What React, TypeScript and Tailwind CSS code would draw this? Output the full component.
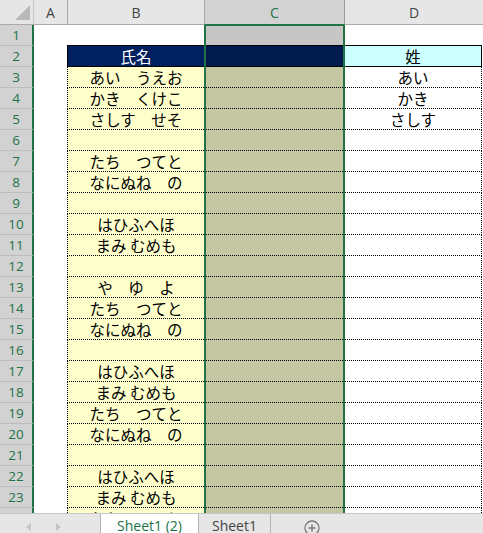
import React from 'react';

type Row = { n: number; b?: string; d?: string };

const rows: Row[] = [
  { n: 1 },
  { n: 2, b: '氏名', d: '姓' },
  { n: 3, b: 'あい　うえお', d: 'あい' },
  { n: 4, b: 'かき　くけこ', d: 'かき' },
  { n: 5, b: 'さしす　せそ', d: 'さしす' },
  { n: 6 },
  { n: 7, b: 'たち　つてと' },
  { n: 8, b: 'なにぬね　の' },
  { n: 9 },
  { n: 10, b: 'はひふへほ' },
  { n: 11, b: 'まみ むめも' },
  { n: 12 },
  { n: 13, b: 'や　ゆ　よ' },
  { n: 14, b: 'たち　つてと' },
  { n: 15, b: 'なにぬね　の' },
  { n: 16 },
  { n: 17, b: 'はひふへほ' },
  { n: 18, b: 'まみ むめも' },
  { n: 19, b: 'たち　つてと' },
  { n: 20, b: 'なにぬね　の' },
  { n: 21 },
  { n: 22, b: 'はひふへほ' },
  { n: 23, b: 'まみ むめも' },
  { n: 24, b: 'たち　つてと' },
];

const uiFont = { fontFamily: '"Open Sans", "Liberation Sans", sans-serif' };
const jpFont = { fontFamily: '"Noto Sans CJK JP", "Noto Sans", sans-serif' };

function SheetRow({ row }: { row: Row }) {
  const first = row.n === 1;
  const head = row.n === 2;

  const bCls = first
    ? 'bg-white border-b border-black'
    : head
      ? 'bg-[#002060] text-white border-l border-b border-black'
      : 'bg-[#ffffcc] text-black border-l border-b border-dotted border-black';

  // inner fill of the selected column C
  const cCls = first
    ? 'bg-[#c6c6c6] border-t border-t-[#217346] border-b border-b-black'
    : head
      ? 'bg-[#001a4d] border-b border-b-black'
      : 'bg-[#c5c6a2] border-b border-dotted border-b-black';

  const dCls = first
    ? 'bg-white border-b border-black'
    : head
      ? 'bg-[#ccffff] border-b border-black border-r border-r-black'
      : 'bg-white border-b border-r border-dotted border-black';

  return (
    <div className="flex h-[21px] shrink-0">
      <div
        className="w-[34px] h-full shrink-0 bg-[#d2d2d2] border-r-2 border-[#217346] border-b border-b-[#bdbdbd] flex items-center justify-center text-[13.5px] text-[#217346]"
        style={uiFont}
      >
        {row.n}
      </div>
      <div className="w-[33px] h-full shrink-0 bg-white" />
      <div
        className={`w-[137px] h-full shrink-0 flex items-center justify-center text-[15.5px] leading-[20px] ${bCls}`}
        style={jpFont}
      >
        {row.b}
      </div>
      <div className="w-[141px] h-full shrink-0 border-x-2 border-[#217346]">
        <div className={`w-full h-full ${cCls}`} />
      </div>
      <div
        className={`w-[137px] h-full shrink-0 flex items-center justify-center text-[15.5px] leading-[20px] text-black ${dCls}`}
        style={jpFont}
      >
        {row.d}
      </div>
    </div>
  );
}

export default function App() {
  return (
    <div className="w-[483px] h-[533px] overflow-hidden bg-white flex flex-col">
      {/* column headers */}
      <div className="flex h-[25px] shrink-0 text-[14px]" style={uiFont}>
        <div className="w-[34px] h-full shrink-0 bg-[#e6e6e6] border-r border-r-[#c8c8c8] border-b border-b-[#ababab] flex items-end justify-end pr-[1px] pb-[1px]">
          <svg width="18" height="18" viewBox="0 0 18 18" className="mb-[1px]">
            <polygon points="16,1 16,16 1,16" fill="#b9b9b9" />
          </svg>
        </div>
        <div className="w-[34px] h-full shrink-0 bg-[#e6e6e6] border-r border-r-[#ababab] border-b border-b-[#ababab] flex items-center justify-center text-[#444]">
          A
        </div>
        <div className="w-[136px] h-full shrink-0 bg-[#e6e6e6] border-b border-b-[#ababab] flex items-center justify-center text-[#444]">
          B
        </div>
        <div className="w-[141px] h-full shrink-0 bg-[#d2d2d2] border-l border-r border-l-[#ababab] border-r-[#9b9b9b] border-b border-b-[#217346] flex items-center justify-center text-[#217346]">
          C
        </div>
        <div className="flex-1 h-full bg-[#e6e6e6] border-b border-b-[#ababab] flex items-center justify-center text-[#444]">
          D
        </div>
      </div>

      {/* grid body */}
      <div className="flex-1 overflow-hidden flex flex-col">
        {rows.map((r) => (
          <SheetRow key={r.n} row={r} />
        ))}
      </div>

      {/* sheet tabs */}
      <div className="h-[20px] shrink-0 flex bg-[#e6e6e6] border-t border-[#c6c6c6] text-[14px] leading-[18px] overflow-hidden" style={uiFont}>
        <div className="w-[100px] shrink-0 flex items-center pt-[6px]">
          <svg width="8" height="10" viewBox="0 0 8 10" className="ml-[25px]">
            <polygon points="6,1 6,9 1,5" fill="#c4c4c4" />
          </svg>
          <svg width="8" height="10" viewBox="0 0 8 10" className="ml-[21px]">
            <polygon points="2,1 2,9 7,5" fill="#c4c4c4" />
          </svg>
        </div>
        <div className="w-[99px] shrink-0 bg-white border-l border-r border-[#b4b4b4] -mt-px flex justify-center pt-[4px] text-[#217346]">
          Sheet1 (2)
        </div>
        <div className="w-[72px] shrink-0 border-r border-[#b4b4b4] flex justify-center pt-[3px] text-[#444]">
          Sheet1
        </div>
        <div className="flex-1 flex pl-[33px] pt-[6px]">
          <svg width="16" height="16" viewBox="0 0 16 16">
            <circle cx="8" cy="8" r="7" fill="none" stroke="#7a7a7a" strokeWidth="1.3" />
            <path d="M8 4.5v7M4.5 8h7" stroke="#7a7a7a" strokeWidth="1.5" />
          </svg>
        </div>
      </div>
    </div>
  );
}
